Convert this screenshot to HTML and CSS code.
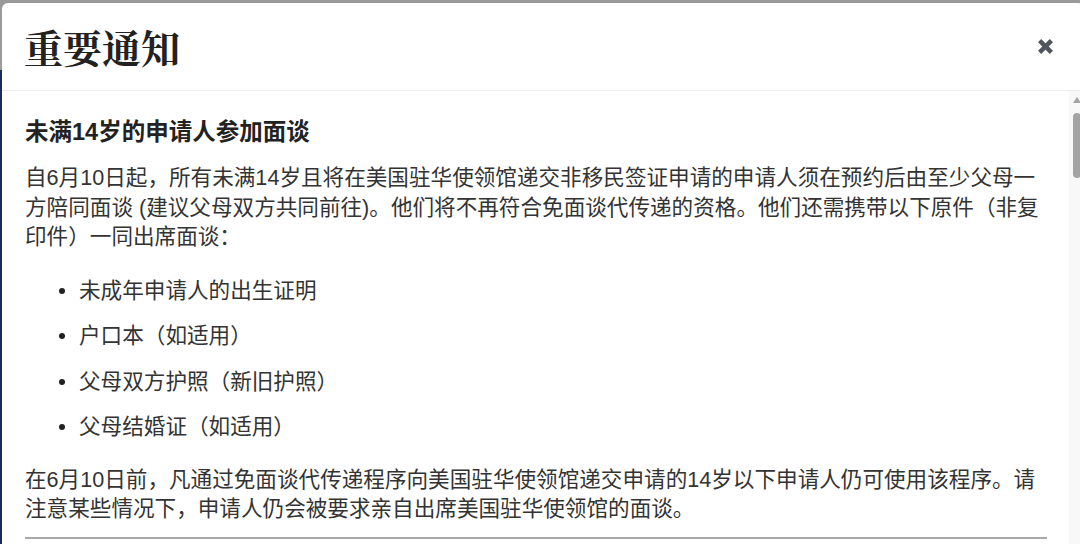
FILE: index.html
```html
<!DOCTYPE html>
<html lang="zh-CN">
<head>
<meta charset="utf-8">
<title>重要通知</title>
<link rel="stylesheet" href="styles.css">
</head>
<body>
<div class="modal">
  <header class="modal-header">
    <h1 class="modal-title">重要通知</h1>
    <button class="close" aria-label="关闭">
      <svg width="17" height="17" viewBox="0 0 17 17"><path d="M2.6 2.6 L14.4 14.4 M14.4 2.6 L2.6 14.4" stroke="#50565e" stroke-width="4.4" fill="none"/></svg>
    </button>
  </header>
  <div class="modal-main">
    <div class="modal-body">
      <h2 class="section-title">未满14岁的申请人参加面谈</h2>
      <p class="text">自6月10日起，所有未满14岁且将在美国驻华使领馆递交非移民签证申请的申请人须在预约后由至少父母一方陪同面谈 (建议父母双方共同前往)。他们将不再符合免面谈代传递的资格。他们还需携带以下原件（非复印件）一同出席面谈：</p>
      <ul class="doc-list">
        <li>未成年申请人的出生证明</li>
        <li>户口本（如适用）</li>
        <li>父母双方护照（新旧护照）</li>
        <li>父母结婚证（如适用）</li>
      </ul>
      <p class="text">在6月10日前，凡通过免面谈代传递程序向美国驻华使领馆递交申请的14岁以下申请人仍可使用该程序。请注意某些情况下，申请人仍会被要求亲自出席美国驻华使领馆的面谈。</p>
      <hr class="divider">
    </div>
    <div class="scrollbar">
      <span class="scroll-arrow"></span>
      <span class="scroll-thumb"></span>
    </div>
  </div>
</div>
</body>
</html>
```

FILE: styles.css
```css
html, body {
  margin: 0;
  height: 100%;
  overflow: hidden;
}
body {
  padding: 3px 0 0 2px;
  box-sizing: border-box;
  background: linear-gradient(to bottom, #9a9a9a 0, #9a9a9a 70px, #1a2c58 70px);
  font-family: "Liberation Sans", "Noto Sans CJK SC", sans-serif;
  color: #333;
}
.modal {
  width: 1082px;
  height: 100%;
  background: #fff;
  border-radius: 6px 6px 0 0;
  display: flex;
  flex-direction: column;
}
.modal-header {
  height: 87px;
  flex: none;
  display: flex;
  align-items: center;
  padding: 0 0 0 22px;
  border-bottom: 1px solid #ececec;
}
.modal-title {
  flex: 1;
  margin: 0;
  font-family: "Noto Serif CJK SC", "Noto Sans CJK SC", serif;
  font-weight: 700;
  font-size: 39px;
  line-height: 1.2;
  color: #222;
}
.close {
  border: 0;
  background: none;
  padding: 0;
  margin-right: 30px;
  width: 17px;
  height: 17px;
  display: flex;
}
.modal-main {
  flex: 1;
  display: flex;
  min-height: 0;
}
.modal-body {
  flex: 1;
  padding: 25px 22px 0 23px;
}
.section-title {
  margin: 0 0 14px;
  font-size: 23.5px;
  line-height: 33px;
  font-weight: 700;
  color: #222;
}
.text {
  margin: 0;
  font-size: 21.6px;
  line-height: 29.5px;
}
.doc-list {
  list-style: none;
  margin: 24px 0 22.5px;
  padding: 0 0 0 34px;
  font-size: 21.6px;
  line-height: 30px;
}
.doc-list li {
  display: flex;
  align-items: center;
  margin-bottom: 15.5px;
}
.doc-list li:last-child {
  margin-bottom: 0;
}
.doc-list li::before {
  content: "";
  width: 6px;
  height: 6px;
  border-radius: 50%;
  background: #222;
  margin-right: 14px;
  flex: none;
}
.divider {
  margin: 13px 0 0;
  border: 0;
  border-top: 2px solid #a8a8a8;
}
.scrollbar {
  width: 15px;
  flex: none;
  background: #f8f8f8;
  display: flex;
  flex-direction: column;
  align-items: center;
  padding-top: 6px;
  box-sizing: border-box;
}
.scroll-arrow {
  width: 0;
  height: 0;
  border-left: 4px solid transparent;
  border-right: 4px solid transparent;
  border-bottom: 6px solid #a3a3a3;
}
.scroll-thumb {
  margin-top: 10px;
  width: 8px;
  height: 65px;
  border-radius: 4px;
  background: #a3a3a3;
}
```
